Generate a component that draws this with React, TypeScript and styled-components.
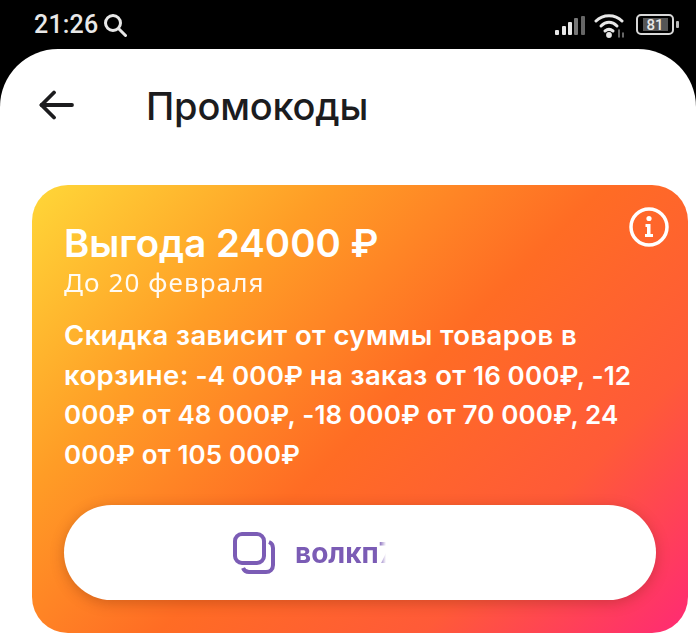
import React from "react";
import styled, { createGlobalStyle } from "styled-components";

const GlobalStyle = createGlobalStyle`
  html, body {
    margin: 0;
    padding: 0;
    background: #000;
  }
  body {
    font-family: "Inter", "Liberation Sans", sans-serif;
  }
`;

const Screen = styled.div`
  width: 696px;
  height: 641px;
  overflow: hidden;
  background: #000;
  display: flex;
  flex-direction: column;
`;

const StatusBar = styled.div`
  height: 49px;
  flex: none;
  display: flex;
  align-items: center;
  justify-content: space-between;
  padding: 0 17px 0 34px;
  color: #e8e8e8;
`;

const StatusLeft = styled.div`
  display: flex;
  align-items: center;
  gap: 5px;
  font-family: "Roboto", sans-serif;
  font-size: 25px;
  font-weight: 500;
  letter-spacing: 0.2px;
`;

const StatusRight = styled.div`
  display: flex;
  align-items: center;
  gap: 9px;
`;

const Battery = styled.div`
  display: flex;
  align-items: center;
  gap: 2px;
  margin-left: 2px;
`;

const BatteryBox = styled.div`
  width: 34px;
  height: 17px;
  border: 2px solid #d8d8d8;
  border-radius: 5px;
  display: flex;
  align-items: center;
  justify-content: center;
  font-family: "Roboto", sans-serif;
  font-size: 15px;
  font-weight: 500;
  color: #e8e8e8;
`;

const BatteryLevel = styled.div`
  width: 25px;
  height: 13px;
  background: #555;
  display: flex;
  align-items: center;
  justify-content: center;
`;

const BatteryCap = styled.div`
  width: 3px;
  height: 7px;
  background: #bbb;
  border-radius: 1px;
`;

const Sheet = styled.div`
  flex: 1;
  background: #fff;
  border-radius: 58px 58px 0 0;
  display: flex;
  flex-direction: column;
  padding: 0 8px 0 32px;
`;

const Header = styled.div`
  height: 114px;
  flex: none;
  display: flex;
  align-items: center;
  margin-bottom: 22px;
  color: #1c1c1e;
`;

const BackButton = styled.div`
  width: 114px;
  display: flex;
  align-items: center;
  padding-left: 7px;
  box-sizing: border-box;
  margin-top: -2px;
`;

const Title = styled.h1`
  margin: 0;
  font-size: 38px;
  font-weight: 500;
  line-height: 1;
  letter-spacing: -0.2px;
`;

const PromoCard = styled.div`
  height: 448px;
  flex: none;
  box-sizing: border-box;
  border-radius: 36px;
  padding: 37px 32px 33px;
  color: #fff;
  background: linear-gradient(135deg, #ffd738 0%, #ff9d26 27%, #ff6c24 52%, #ff5a38 76%, #ff2a74 100%);
  position: relative;
  display: flex;
  flex-direction: column;
`;

const InfoIcon = styled.div`
  position: absolute;
  top: 22px;
  right: 19px;
  width: 40px;
  height: 40px;
`;

const Benefit = styled.div`
  font-size: 38.4px;
  font-weight: 600;
  line-height: 42px;
`;

const Deadline = styled.div`
  font-family: "Noto Sans", sans-serif;
  font-size: 26px;
  letter-spacing: 1.1px;
  line-height: 32px;
  margin-top: 2px;
  opacity: 0.95;
`;

const Description = styled.p`
  margin: 18px 0 0;
  font-size: 26px;
  font-weight: 600;
  line-height: 39.5px;
  letter-spacing: 0.15px;
  width: 590px;
`;

const WideText = styled.span`
  font-size: 27.5px;
  letter-spacing: 0.4px;
`;

const CopyButton = styled.div`
  margin-top: auto;
  height: 95px;
  border-radius: 48px;
  background: #fff;
  box-shadow: 0 3px 14px rgba(90, 30, 0, 0.28);
  display: flex;
  align-items: center;
  padding-left: 169px;
  gap: 20px;
`;

const PromoCode = styled.div`
  width: 91px;
  overflow: hidden;
  white-space: nowrap;
  font-size: 28px;
  font-weight: 700;
  color: #7b5cb5;
  mask-image: linear-gradient(to right, #000 92%, transparent 100%);
`;

const App: React.FC = () => {
  return (
    <Screen>
      <GlobalStyle />
      <StatusBar>
        <StatusLeft>
          21:26
          <svg width="24" height="24" viewBox="0 0 24 24" fill="none" stroke="#e8e8e8" strokeWidth="3" strokeLinecap="round">
            <circle cx="10" cy="10" r="7.500" />
            <path d="M16 16L22.500 22.500" />
          </svg>
        </StatusLeft>
        <StatusRight>
          <svg width="30" height="24" viewBox="0 0 30 24">
            <rect x="0" y="17" width="4" height="5" rx="1" fill="#e8e8e8" />
            <rect x="7" y="13" width="4" height="9" rx="1" fill="#e8e8e8" />
            <rect x="13" y="9" width="4" height="13" rx="1" fill="#e8e8e8" />
            <rect x="19" y="5" width="4" height="17" rx="1" fill="#777" />
            <rect x="26" y="3" width="4" height="19" rx="1" fill="#666" />
          </svg>
          <svg width="31" height="26" viewBox="0 0 31 26" fill="none" stroke="#e8e8e8" strokeWidth="3" strokeLinecap="round">
            <path d="M2 9C9 2 21 2 28 9" />
            <path d="M7 14C12 9 18 9 23 14" />
            <path d="M11 19C13.500 17 16.500 17 19 19" />
            <circle cx="15" cy="23" r="1.400" fill="#e8e8e8" />
            <path d="M25 25V18M29 25V21" stroke="#888" strokeWidth="1.500" />
          </svg>
          <Battery>
            <BatteryBox>
              <BatteryLevel>81</BatteryLevel>
            </BatteryBox>
            <BatteryCap />
          </Battery>
        </StatusRight>
      </StatusBar>
      <Sheet>
        <Header>
          <BackButton>
            <svg width="36" height="30" viewBox="0 0 36 30" fill="none" stroke="#1c1c1e" strokeWidth="3.800" strokeLinecap="round" strokeLinejoin="round">
              <path d="M2.500 15H33" />
              <path d="M15 2.500L2.500 15L15 27.500" />
            </svg>
          </BackButton>
          <Title>Промокоды</Title>
        </Header>
        <PromoCard>
          <InfoIcon>
            <svg width="40" height="40" viewBox="0 0 40 40" fill="none">
              <circle cx="20" cy="20" r="18" stroke="#fff" strokeWidth="3.500" />
              <circle cx="20" cy="11.500" r="2.600" fill="#fff" />
              <path d="M16.500 17H21.500V27H24V30H16V27H18V20H16.500Z" fill="#fff" />
            </svg>
          </InfoIcon>
          <Benefit>Выгода 24000 ₽</Benefit>
          <Deadline>До 20 февраля</Deadline>
          <Description>
            <WideText>Скидка зависит от суммы товаров в корзине:</WideText> -4 000₽ <WideText>на заказ от</WideText> 16 000₽, -12 000₽ от 48 000₽, -18 000₽ от 70 000₽, 24 000₽ от 105 000₽
          </Description>
          <CopyButton>
            <svg width="42" height="42" viewBox="0 0 42 42" fill="none" stroke="#7b5cb5" strokeWidth="4">
              <rect x="2" y="2" width="29" height="29" rx="7" />
              <path d="M10 36C11 38.500 13 40 16 40H33C37 40 40 37 40 33V16C40 13 38.500 11 36 10" />
            </svg>
            <PromoCode>волкп7</PromoCode>
          </CopyButton>
        </PromoCard>
      </Sheet>
    </Screen>
  );
};

export default App;
